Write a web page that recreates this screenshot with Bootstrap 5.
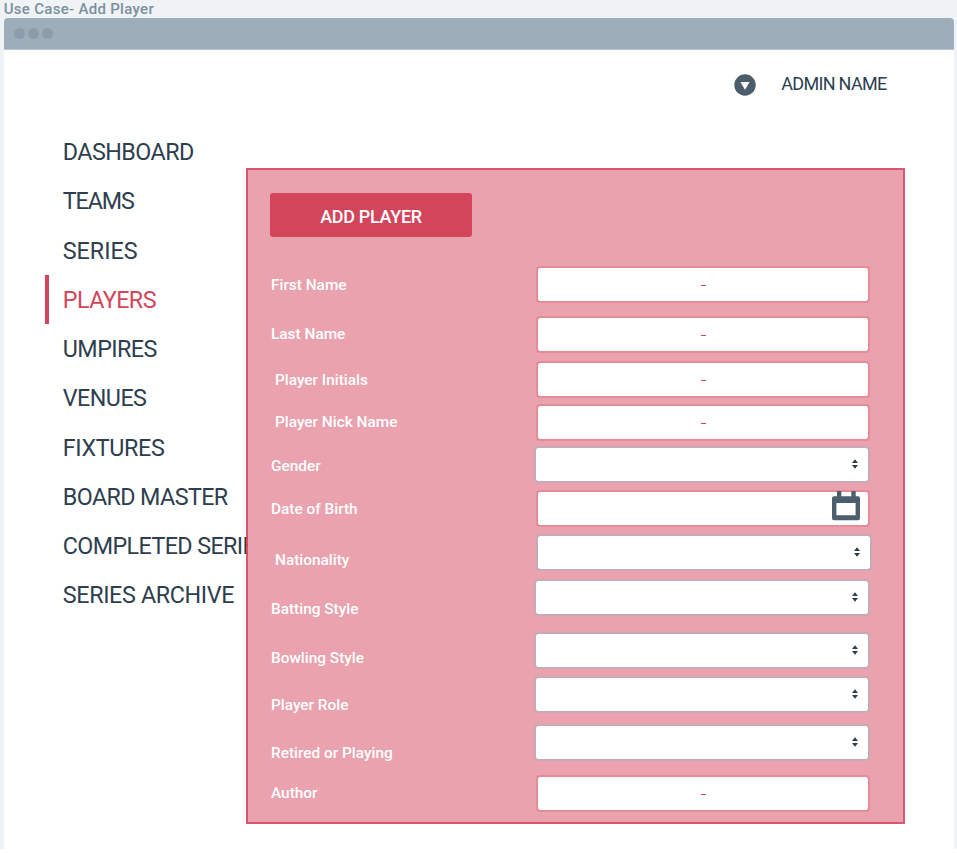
<!DOCTYPE html>
<html lang="en">
<head>
<meta charset="utf-8">
<meta name="viewport" content="width=device-width, initial-scale=1">
<title>Use Case- Add Player</title>
<link href="https://cdn.jsdelivr.net/npm/bootstrap@5.3.0/dist/css/bootstrap.min.css" rel="stylesheet">
<style>
body { font-family: Roboto, "Liberation Sans", sans-serif; height: 853px; color: #2d3e4f; }
.board { height: 849px; background: #eff3f6; padding: 0 3.5px 0 3.7px; }
.board-title { height: 17.5px; line-height: 18px; font-size: 15px; color: #7b8f9e; letter-spacing: .3px; }
.window-frame { height: 831.5px; border-radius: 4px 4px 0 0; }
.window-bar { height: 32px; background: #9eadba; border-radius: 4px 4px 0 0; border-bottom: 1px solid #b9c5ce; gap: 3px; padding-left: 10.3px; }
.window-dot { width: 11px; height: 11px; background: #8b9dab; }
.admin { height: 77.6px; padding: 24px 67px 0 0; gap: 25px; font-size: 18px; line-height: 21px; }
.admin span { letter-spacing: -.7px; line-height: 20px; }
.side { width: 242.3px; padding-left: 41.8px; }
.side .nav-link { height: 49.25px; line-height: 51.25px; padding: 0 0 0 13.3px; border-left: 4px solid transparent; border-radius: 0; color: #2d3e4f; font-size: 23.3px; letter-spacing: -.55px; white-space: nowrap; }
.side .nav-link.active { color: #d3455b; border-left-color: #d3455b; }
.side .ls-a { letter-spacing: -1.1px; }
.side .ls-b { letter-spacing: 0; }
.side .ls-c { letter-spacing: -.6px; }
.side .ls-d { letter-spacing: -.36px; }
.add-panel { width: 659.5px; height: 656px; margin-top: 41px; padding: 23px 33px 0 22px; border: 2px solid rgba(211,69,91,.9); background: #e9a2ae padding-box; }
.add-btn { width: 202px; height: 44px; padding: 2px 0 0; border: 0; border-radius: 3px; background: #d3455b; color: #fff; font-size: 18px; letter-spacing: -.3px; }
.fields { margin-top: 29px; grid-template-columns: 264px 1fr; grid-template-rows: 50px 45px 43px 42px 44px 44px 45px 53px 44px 48px 51px 37px; }
.field-label { padding-left: 1px; color: #fff; font-size: 15.4px; line-height: 20px; padding-top: 9px; }
.in4 { padding-left: 5px; }
.d0 { padding-top: 8px; }
.d2 { padding-top: 10px; }
.d6 { padding-top: 16px; }
.d9 { padding-top: 19px; }
.d10 { padding-top: 20px; }
.d8 { padding-top: 16px; }
.box { width: 334px; height: 37px; margin-left: 2px; background: #fff padding-box; border: 2px solid #e68b98; border-radius: 4px; }
.pick { width: 336px; margin-left: 0; border-color: #c8a9b6; padding-right: 10px; }
.pick svg { margin-top: -2px; }
.pick-in { margin-left: 2px; }
.cal { padding-right: 7px; }
.cal svg { margin-top: -6px; }
.dash { width: 5px; height: 1px; background: #d3455b; margin: 2px 0 0 1px; }
</style>
</head>
<body class="bg-white overflow-hidden">
<div class="board">
  <div class="board-title fw-medium">Use Case- Add Player</div>
  <div class="window-frame bg-white">
    <div class="window-bar d-flex align-items-center">
      <span class="window-dot rounded-circle"></span><span class="window-dot rounded-circle"></span><span class="window-dot rounded-circle"></span>
    </div>
    <header class="admin d-flex justify-content-end">
      <svg width="22" height="22" viewBox="0 0 22 22"><circle cx="11" cy="11" r="10.7" fill="#4c5d6b"/><path d="M6.4 8h9.2L11 15.8z" fill="#fff"/></svg>
      <span>ADMIN NAME</span>
    </header>
    <div class="d-flex">
      <nav class="side nav flex-column flex-nowrap flex-shrink-0">
        <a class="nav-link" href="#">DASHBOARD</a>
        <a class="nav-link ls-a" href="#">TEAMS</a>
        <a class="nav-link ls-b" href="#">SERIES</a>
        <a class="nav-link active" href="#">PLAYERS</a>
        <a class="nav-link" href="#">UMPIRES</a>
        <a class="nav-link" href="#">VENUES</a>
        <a class="nav-link ls-d" href="#">FIXTURES</a>
        <a class="nav-link ls-c" href="#">BOARD MASTER</a>
        <a class="nav-link ls-c" href="#">COMPLETED SERIES</a>
        <a class="nav-link ls-d" href="#">SERIES ARCHIVE</a>
      </nav>
      <main class="add-panel position-relative flex-shrink-0">
        <button class="add-btn btn fw-medium d-block">ADD PLAYER</button>
        <div class="fields d-grid">
          <label class="field-label fw-medium">First Name</label><div class="box d-flex align-items-center justify-content-center"><span class="dash"></span></div>
          <label class="field-label fw-medium d0">Last Name</label><div class="box d-flex align-items-center justify-content-center"><span class="dash"></span></div>
          <label class="field-label fw-medium in4">Player Initials</label><div class="box d-flex align-items-center justify-content-center"><span class="dash"></span></div>
          <label class="field-label fw-medium in4 d0">Player Nick Name</label><div class="box d-flex align-items-center justify-content-center"><span class="dash"></span></div>
          <label class="field-label fw-medium d2">Gender</label><div class="box pick d-flex align-items-center justify-content-end"><svg width="6" height="10" viewBox="0 0 6 10"><path d="M0 4 3 .3 6 4zM0 6h6L3 9.7z" fill="#2d3e4f"/></svg></div>
          <label class="field-label fw-medium">Date of Birth</label><div class="box cal d-flex align-items-center justify-content-end"><svg width="30" height="30" viewBox="0 0 30 30"><path fill="#4c5d6b" fill-rule="evenodd" d="M6 0h4.3v5.3h10V0h4.4v5.3H27a2 2 0 0 1 2 2v20a2 2 0 0 1-2 2H3a2 2 0 0 1-2-2v-20a2 2 0 0 1 2-2h3zM5.4 12v12.3h19.2V12z"/></svg></div>
          <label class="field-label fw-medium in4 d6">Nationality</label><div class="box pick pick-in d-flex align-items-center justify-content-end"><svg width="6" height="10" viewBox="0 0 6 10"><path d="M0 4 3 .3 6 4zM0 6h6L3 9.7z" fill="#2d3e4f"/></svg></div>
          <label class="field-label fw-medium d10">Batting Style</label><div class="box pick d-flex align-items-center justify-content-end"><svg width="6" height="10" viewBox="0 0 6 10"><path d="M0 4 3 .3 6 4zM0 6h6L3 9.7z" fill="#2d3e4f"/></svg></div>
          <label class="field-label fw-medium d8">Bowling Style</label><div class="box pick d-flex align-items-center justify-content-end"><svg width="6" height="10" viewBox="0 0 6 10"><path d="M0 4 3 .3 6 4zM0 6h6L3 9.7z" fill="#2d3e4f"/></svg></div>
          <label class="field-label fw-medium d9">Player Role</label><div class="box pick d-flex align-items-center justify-content-end"><svg width="6" height="10" viewBox="0 0 6 10"><path d="M0 4 3 .3 6 4zM0 6h6L3 9.7z" fill="#2d3e4f"/></svg></div>
          <label class="field-label fw-medium d9">Retired or Playing</label><div class="box pick d-flex align-items-center justify-content-end"><svg width="6" height="10" viewBox="0 0 6 10"><path d="M0 4 3 .3 6 4zM0 6h6L3 9.7z" fill="#2d3e4f"/></svg></div>
          <label class="field-label fw-medium d0">Author</label><div class="box d-flex align-items-center justify-content-center"><span class="dash"></span></div>
        </div>
      </main>
    </div>
  </div>
</div>
<script src="https://cdn.jsdelivr.net/npm/bootstrap@5.3.0/dist/js/bootstrap.bundle.min.js"></script>
</body>
</html>
